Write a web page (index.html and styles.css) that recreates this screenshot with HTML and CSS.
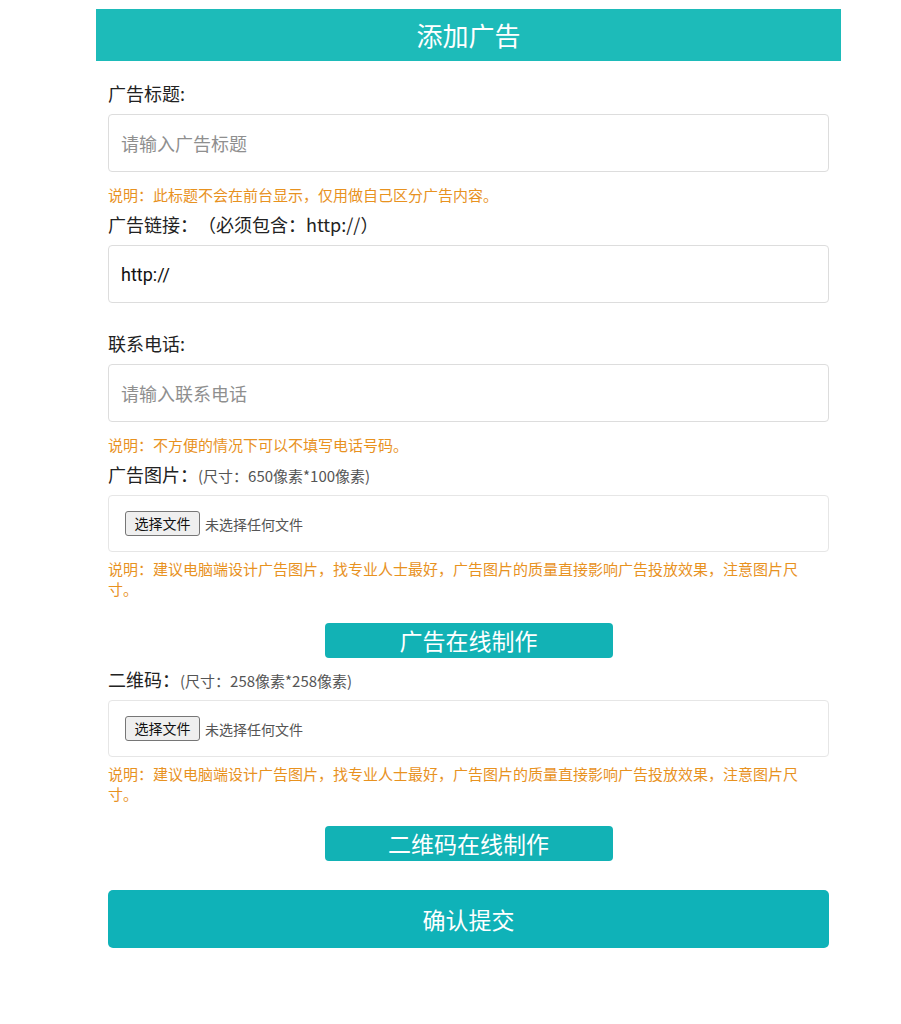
FILE: index.html
```html
<!DOCTYPE html>
<html lang="zh">
<head>
<meta charset="utf-8">
<title>添加广告</title>
<link rel="stylesheet" href="styles.css">
</head>
<body>
<div class="page">
  <div class="header">添加广告</div>
  <form class="form">
    <div class="label first">广告标题:</div>
    <div class="box"><span class="placeholder">请输入广告标题</span></div>
    <div class="note">说明：此标题不会在前台显示，仅用做自己区分广告内容。</div>

    <div class="label after-note">广告链接：（必须包含：http://）</div>
    <div class="box"><span class="value">http://</span></div>

    <div class="label after-box">联系电话:</div>
    <div class="box"><span class="placeholder">请输入联系电话</span></div>
    <div class="note">说明：不方便的情况下可以不填写电话号码。</div>

    <div class="label after-note">广告图片：<span class="small">(尺寸：650像素*100像素)</span></div>
    <div class="box file"><span class="file-btn">选择文件</span><span class="file-text">未选择任何文件</span></div>
    <div class="note tight">说明：建议电脑端设计广告图片，找专业人士最好，广告图片的质量直接影响广告投放效果，注意图片尺寸。</div>

    <div class="make-row first-make"><span class="make-btn">广告在线制作</span></div>

    <div class="label after-make">二维码：<span class="small">(尺寸：258像素*258像素)</span></div>
    <div class="box file"><span class="file-btn">选择文件</span><span class="file-text">未选择任何文件</span></div>
    <div class="note tight">说明：建议电脑端设计广告图片，找专业人士最好，广告图片的质量直接影响广告投放效果，注意图片尺寸。</div>

    <div class="make-row second-make"><span class="make-btn">二维码在线制作</span></div>

    <div class="submit">确认提交</div>
  </form>
</div>
</body>
</html>
```

FILE: styles.css
```css
html, body {
  margin: 0;
  padding: 0;
  background: #ffffff;
}
body {
  font-family: "Noto Sans CJK SC", "Noto Sans", "Liberation Sans", sans-serif;
  color: #333333;
  text-spacing-trim: space-all;
}
.page {
  width: 745px;
  margin: 9px 0 0 96px;
}
.header {
  height: 52px;
  background: #1dbbb9;
  color: #ffffff;
  font-size: 26px;
  line-height: 52px;
  text-align: center;
}
.form {
  padding: 0 12px;
  display: flex;
  flex-direction: column;
}
.label {
  font-size: 18px;
  line-height: 24px;
  height: 24px;
  color: #222222;
  white-space: nowrap;
}
.label.first { margin-top: 20px; }
.label.after-note { margin-top: 7px; }
.label.after-box { margin-top: 28px; }
.label.after-make { margin-top: 9px; }
.small {
  font-size: 15px;
  color: #555555;
}
.box {
  margin-top: 9px;
  height: 58px;
  box-sizing: border-box;
  border: 1px solid #dddddd;
  border-radius: 4px;
  display: flex;
  align-items: center;
  padding: 0 12px;
  font-size: 18px;
}
.box.file {
  height: 57px;
  padding: 0 16px;
  margin-top: 9px;
  border-color: #e6e6e6;
}
.placeholder {
  color: #8f8f8f;
}
.value {
  color: #111111;
  font-family: "Roboto", "Noto Sans", sans-serif;
}
.file-btn {
  display: inline-block;
  box-sizing: border-box;
  width: 75px;
  height: 25px;
  line-height: 22px;
  text-align: center;
  font-size: 14px;
  color: #111111;
  background: #efefef;
  border: 1px solid #767676;
  border-radius: 3px;
}
.file-text {
  margin-left: 5px;
  font-size: 14px;
  color: #555555;
}
.note {
  margin-top: 13px;
  font-size: 15px;
  line-height: 20px;
  color: #e8921f;
}
.note.tight {
  margin-top: 7px;
  padding-right: 25px;
}
.make-row {
  display: flex;
  justify-content: center;
}
.first-make { margin-top: 24px; }
.second-make { margin-top: 22px; }
.make-btn {
  width: 288px;
  height: 35px;
  line-height: 35px;
  background: #12b2b5;
  border-radius: 4px;
  color: #ffffff;
  font-size: 23px;
  text-align: center;
}
.submit {
  margin-top: 29px;
  height: 58px;
  line-height: 58px;
  background: #0fb2b8;
  border-radius: 5px;
  color: #ffffff;
  font-size: 23px;
  text-align: center;
}
```
